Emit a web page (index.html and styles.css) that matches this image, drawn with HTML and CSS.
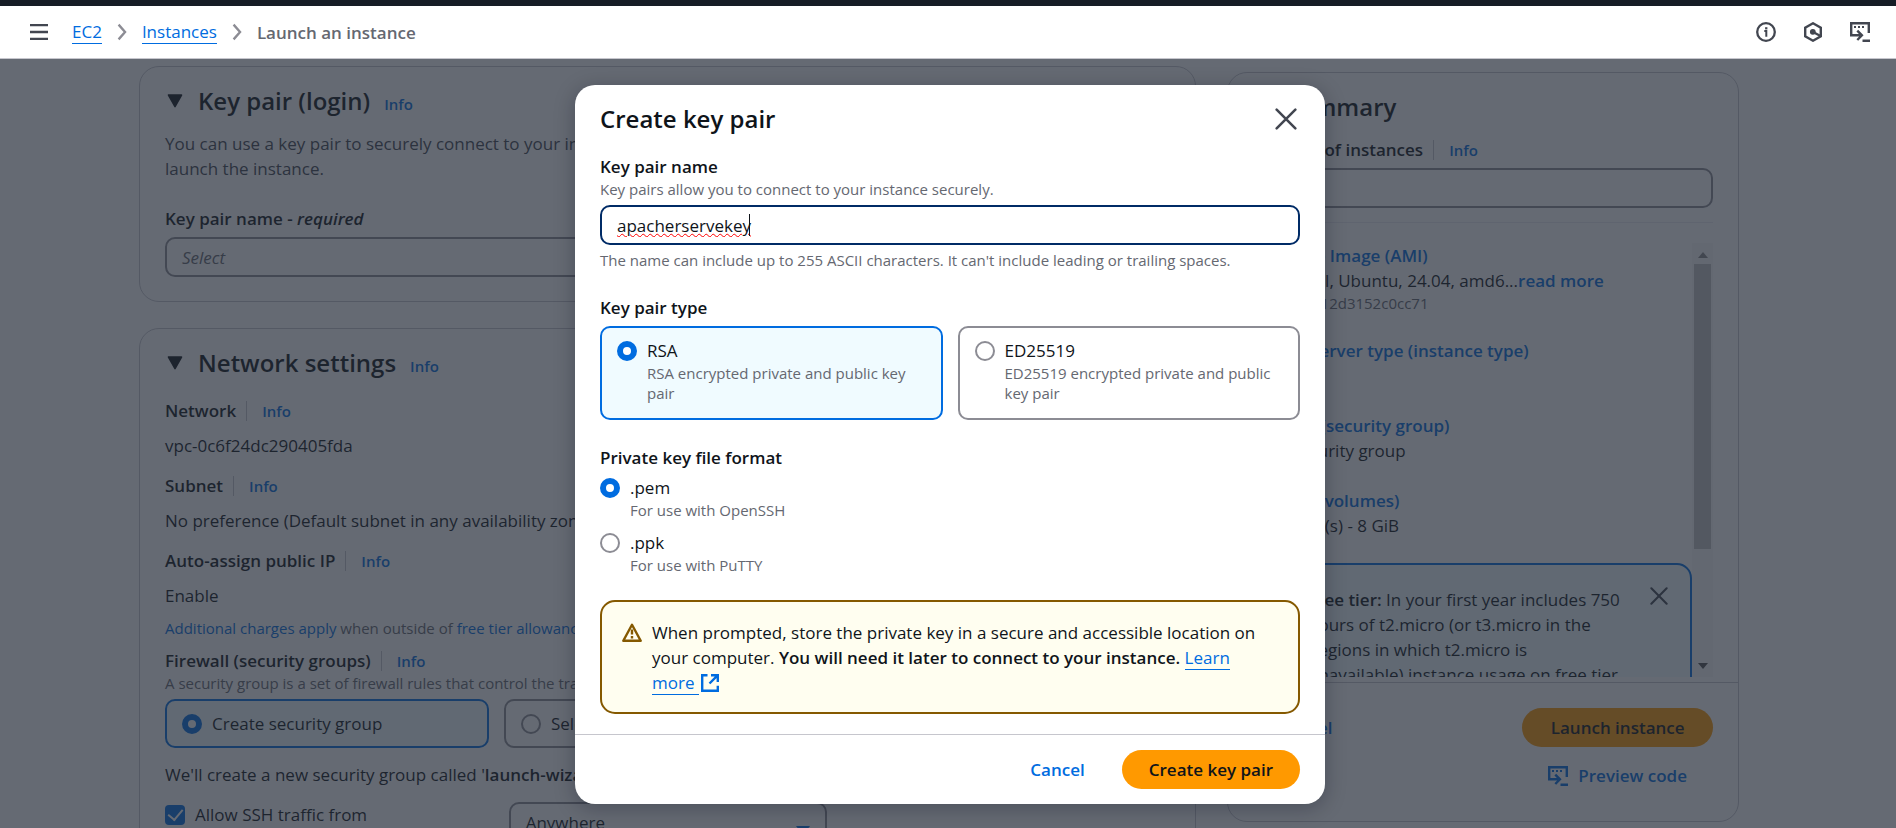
FILE: index.html
```html
<!DOCTYPE html>
<html lang="en">
<head>
<meta charset="utf-8">
<title>Launch an instance | EC2</title>
<link rel="stylesheet" href="styles.css">
</head>
<body>
<svg class="defs" aria-hidden="true">
  <symbol id="i-cmd" viewBox="0 0 20 20"><path d="M1.200 14.500V1.200h17.600V11M0 13.300h10M7.300 8.600l4.600 4.700-4.600 4.700M12.500 18.800H20" fill="none" stroke="currentColor" stroke-width="2.400"/><path d="M4 5h2M8 5h2M12 5h2" stroke="currentColor" stroke-width="2.200"/></symbol>
  <symbol id="i-x" viewBox="0 0 20 20"><path d="M1.5 1.5l17 17M18.5 1.5l-17 17" fill="none" stroke="currentColor" stroke-width="2.3" stroke-linecap="round"/></symbol>
  <symbol id="i-chev" viewBox="0 0 10 20"><path d="M1.2 1.8L8.4 10l-7.2 8.2" fill="none" stroke="currentColor" stroke-width="2.6"/></symbol>
  <symbol id="i-tri" viewBox="0 0 16 14"><path d="M1.5 1h13L8 12.6z" fill="currentColor" stroke="currentColor" stroke-width="1.6" stroke-linejoin="round"/></symbol>
</svg>

<div class="topbar"></div>
<header class="header">
  <button class="icon-btn menu" aria-label="Open navigation"><svg width="18" height="16" viewBox="0 0 18 16"><path d="M0 1.2h18M0 8h18M0 14.8h18" stroke="currentColor" stroke-width="2.3"/></svg></button>
  <nav class="crumbs" aria-label="Breadcrumbs">
    <a href="#">EC2</a>
    <svg width="10" height="18"><use href="#i-chev"/></svg>
    <a href="#">Instances</a>
    <svg width="10" height="18"><use href="#i-chev"/></svg>
    <strong>Launch an instance</strong>
  </nav>
  <div class="tools">
    <button class="icon-btn" aria-label="Info"><svg width="20" height="20" viewBox="0 0 20 20"><circle cx="10" cy="10" r="8.800" fill="none" stroke="currentColor" stroke-width="2.300"/><path d="M8.300 9h2v5.800" fill="none" stroke="currentColor" stroke-width="2"/><path d="M9.100 5.200h2.300v2.200H9.100z" fill="currentColor"/></svg></button>
    <button class="icon-btn" aria-label="Tutorials"><svg width="20" height="20" viewBox="0 0 20 20"><path d="M10 1.300l7.800 4.300v8.800L10 18.700l-7.800-4.300V5.600z" fill="none" stroke="currentColor" stroke-width="2.400"/><circle cx="9.800" cy="9.800" r="2.900" fill="currentColor"/><path d="M10 10l7.500 4" stroke="currentColor" stroke-width="2.400"/></svg></button>
    <button class="icon-btn" aria-label="Preview code"><svg width="20" height="20"><use href="#i-cmd"/></svg></button>
  </div>
</header>

<div class="stage">
  <main class="page">
    <div class="forms">
      <section class="card">
        <h2 class="card-title"><svg width="16" height="14"><use href="#i-tri"/></svg>Key pair (login) <a class="info" href="#">Info</a></h2>
        <p class="desc">You can use a key pair to securely connect to your instance. Ensure that you have access to the selected key pair before you launch the instance.</p>
        <label class="label" for="kp">Key pair name - <em>required</em></label>
        <button class="select placeholder" id="kp">Select</button>
      </section>

      <section class="card">
        <h2 class="card-title"><svg width="16" height="14"><use href="#i-tri"/></svg>Network settings <a class="info" href="#">Info</a></h2>
        <dl class="facts">
          <dt><span>Network</span><a class="info" href="#">Info</a></dt>
          <dd>vpc-0c6f24dc290405fda</dd>
          <dt><span>Subnet</span><a class="info" href="#">Info</a></dt>
          <dd>No preference (Default subnet in any availability zone)</dd>
          <dt><span>Auto-assign public IP</span><a class="info" href="#">Info</a></dt>
          <dd>Enable</dd>
        </dl>
        <p class="small charges"><a href="#">Additional charges apply</a> when outside of <a href="#">free tier allowance</a></p>
        <div class="split"><span>Firewall (security groups)</span><a class="info" href="#">Info</a></div>
        <p class="small">A security group is a set of firewall rules that control the traffic for your instance.</p>
        <div class="tiles sg">
          <label class="tile on"><input type="radio" name="sg" checked><span>Create security group</span></label>
          <label class="tile"><input type="radio" name="sg"><span>Select existing security group</span></label>
        </div>
        <p class="newsg">We'll create a new security group called '<strong>launch-wizard-1</strong>' with the following rules:</p>
        <div class="rule">
          <label class="check"><input type="checkbox" checked>Allow SSH traffic from</label>
          <button class="select anywhere">Anywhere<svg width="14" height="10" viewBox="0 0 14 10"><path d="M0 0h14L7 9z" fill="currentColor"/></svg></button>
        </div>
      </section>
    </div>

    <aside class="summary">
      <h2 class="card-title"><svg width="16" height="14"><use href="#i-tri"/></svg>Summary</h2>
      <label class="split" for="count"><span>Number of instances</span><a class="info" href="#">Info</a></label>
      <input class="count" id="count" type="text">
      <div class="scroller">
        <div class="scroll-body">
          <dl class="specs">
            <dt><a href="#">Software Image (AMI)</a></dt>
            <dd>Canonical, Ubuntu, 24.04, amd6...<a href="#">read more</a><small>ami-0fc8a12d3152c0cc71</small></dd>
            <dt><a href="#">Virtual server type (instance type)</a></dt>
            <dd>t2.micro</dd>
            <dt><a href="#">Firewall (security group)</a></dt>
            <dd>New security group</dd>
            <dt><a href="#">Storage (volumes)</a></dt>
            <dd>1 volume(s) - 8 GiB</dd>
          </dl>
          <div class="tier">
            <p><strong>Free tier:</strong> In your first year includes 750 hours of t2.micro (or t3.micro in the Regions in which t2.micro is unavailable) instance usage on free tier AMIs per month.</p>
            <button class="icon-btn" aria-label="Dismiss"><svg width="18" height="18"><use href="#i-x"/></svg></button>
          </div>
        </div>
        <div class="bar" aria-hidden="true">
          <svg class="up" width="10" height="6" viewBox="0 0 10 6"><path d="M0 6h10L5 0z" fill="currentColor"/></svg>
          <div class="thumb"></div>
          <svg class="down" width="10" height="6" viewBox="0 0 10 6"><path d="M0 0h10L5 6z" fill="currentColor"/></svg>
        </div>
      </div>
      <div class="launch">
        <button class="link">Cancel</button>
        <button class="primary">Launch instance</button>
        <button class="link preview"><svg width="20" height="20"><use href="#i-cmd"/></svg>Preview code</button>
      </div>
    </aside>
  </main>

  <div class="overlay">
    <form class="modal" role="dialog" aria-labelledby="modal-title">
      <div class="modal-head">
        <h2 id="modal-title">Create key pair</h2>
        <button type="button" class="icon-btn" aria-label="Close"><svg width="22" height="22"><use href="#i-x"/></svg></button>
      </div>
      <div class="modal-body">
        <div class="field">
          <label class="label" for="name">Key pair name</label>
          <p class="small">Key pairs allow you to connect to your instance securely.</p>
          <div class="name-box">
            <input class="name" id="name" type="text" value="apacherservekey">
            <span class="caret"></span>
          </div>
          <p class="small">The name can include up to 255 ASCII characters. It can't include leading or trailing spaces.</p>
        </div>
        <fieldset class="field">
          <legend class="label">Key pair type</legend>
          <div class="tiles">
            <label class="tile on"><input type="radio" name="type" checked><span>RSA<small>RSA encrypted private and public key pair</small></span></label>
            <label class="tile"><input type="radio" name="type"><span>ED25519<small>ED25519 encrypted private and public key pair</small></span></label>
          </div>
        </fieldset>
        <fieldset class="field">
          <legend class="label">Private key file format</legend>
          <div class="radios">
            <label><input type="radio" name="fmt" checked><span>.pem<small>For use with OpenSSH</small></span></label>
            <label><input type="radio" name="fmt"><span>.ppk<small>For use with PuTTY</small></span></label>
          </div>
        </fieldset>
        <div class="alert">
          <svg width="20" height="20" viewBox="0 0 20 20"><path d="M10 1.800L18.700 17.800H1.300z" fill="none" stroke="currentColor" stroke-width="2.400" stroke-linejoin="round"/><path d="M10 6.600v5M10 13v2.400" stroke="currentColor" stroke-width="2.400"/></svg>
          <p>When prompted, store the private key in a secure and accessible location on your computer. <strong>You will need it later to connect to your instance.</strong> <a href="#">Learn more </a><svg class="ext" width="18" height="18" viewBox="0 0 18 18"><path d="M6.500 1.200H1.200v15.600h15.600v-5M10 1.200h6.800V8M16.800 1.200L8.500 9.500" fill="none" stroke="currentColor" stroke-width="2.400"/></svg></p>
        </div>
      </div>
      <div class="modal-foot">
        <button type="button" class="link">Cancel</button>
        <button type="button" class="primary">Create key pair</button>
      </div>
    </form>
  </div>
</div>
</body>
</html>
```
FILE: styles.css
```css
:root {
  --text: #0f141a;
  --muted: #656871;
  --link: #006ce0;
  --border: #8c8c94;
  --soft: #c6c6cd;
  --accent: #ff9900;
  --bold: 600;
}

* { box-sizing: border-box; margin: 0; padding: 0; }

body {
  display: flex;
  flex-direction: column;
  height: 100vh;
  overflow: hidden;
  font: 17px/25px "Open Sans", "Noto Sans", sans-serif;
  color: var(--text);
  background: #fff;
}

button, input { font: inherit; color: inherit; }
button { background: none; border: 0; cursor: pointer; }
fieldset { border: 0; min-width: 0; }
a { color: var(--link); text-decoration: none; }
svg { flex: none; }
h2, strong { font-weight: var(--bold); }
.defs { position: absolute; width: 0; height: 0; }

.small, small { font-size: 15px; line-height: 20px; color: var(--muted); }
small { display: block; }
.label { display: block; font-weight: var(--bold); }
.info { font-size: 15px; line-height: 20px; font-weight: var(--bold); }

/* Header */
.topbar { flex: none; height: 6px; background: #161d26; }
.header {
  flex: none;
  display: flex;
  align-items: center;
  height: 53px;
  padding: 0 26px 0 30px;
  border-bottom: 1px solid var(--soft);
}
.icon-btn { display: flex; color: #424650; }
.crumbs { display: flex; align-items: center; gap: 15px; margin-left: 24px; color: var(--border); }
.crumbs a { line-height: 22px; border-bottom: 1px solid; }
.crumbs strong { color: var(--muted); }
.tools { display: flex; gap: 27px; margin-left: auto; }

/* Page */
.stage { position: relative; flex: 1; min-height: 0; overflow: hidden; }
.page {
  display: grid;
  grid-template-columns: minmax(0, 1fr) 512px;
  align-items: start;
  gap: 31px;
  padding: 7px 157px 0 139px;
}
.forms { display: grid; gap: 26px; }
.card, .summary { border: 1px solid var(--soft); border-radius: 20px; }
.card { padding: 19px 25px 24px; }
.card-title { display: flex; align-items: baseline; font-size: 24px; line-height: 30px; }
.card-title svg { margin: 0 15px 0 2px; align-self: center; }
.card-title .info { margin-left: 14px; }
.desc { margin: 15px 0 25px; color: #424650; }

.select {
  display: flex;
  align-items: center;
  justify-content: space-between;
  width: 100%;
  height: 40px;
  margin-top: 6px;
  padding: 0 15px;
  border: 2px solid var(--border);
  border-radius: 10px;
}
.placeholder { font-style: italic; color: var(--muted); }

.facts { margin-top: 20px; }
.facts dt, .split { display: flex; align-items: center; font-weight: var(--bold); }
.facts dt .info, .split .info { margin-left: 10px; padding-left: 15px; border-left: 1px solid var(--soft); }
.facts dd { margin: 10px 0 15px; }
.charges { margin: -5px 0 10px; }
.newsg { margin: 14px 0 15px; }
.rule { display: grid; grid-template-columns: 1fr 2fr; gap: 13px; }
.check { display: flex; align-items: center; gap: 10px; height: 25px; }
.anywhere { width: 318px; margin-top: 0; }
.anywhere svg { margin-top: 18px; color: var(--link); }

input[type="radio"], input[type="checkbox"] {
  flex: none;
  appearance: none;
  width: 20px;
  height: 20px;
  margin-top: 3px;
  border: 2px solid var(--border);
  border-radius: 50%;
  background: #fff;
}
input[type="radio"]:checked { border: 6px solid var(--link); }
input[type="checkbox"] { border-radius: 4px; margin-top: 0; }
input[type="checkbox"]:checked {
  border: 0;
  background: var(--link);
  display: grid;
  place-items: center;
}
input[type="checkbox"]:checked::after {
  content: "";
  width: 7px;
  height: 12px;
  margin-bottom: 3px;
  border: solid #fff;
  border-width: 0 2px 2px 0;
  rotate: 40deg;
}

.tiles { display: grid; grid-template-columns: 1fr 1fr; gap: 15px; margin-top: 6px; }
.tile {
  display: flex;
  gap: 10px;
  padding: 10px 15px 15px;
  border: 2px solid var(--border);
  border-radius: 10px;
}
.tile.on { border-color: var(--link); background: #f0fbff; }
.sg { grid-template-columns: 324px 324px; }
.sg .tile { padding: 10px 15px; }

/* Summary */
.summary { margin-top: 6px; }
.summary h2 { margin: 19px 24px 15px; }
.summary .split { margin: 0 24px; }
.count {
  display: block;
  width: calc(100% - 49px);
  height: 40px;
  margin: 6px 24px 14px;
  border: 2px solid var(--border);
  border-radius: 10px;
}
.scroller {
  display: flex;
  height: 455px;
  margin: 0 25px 0 24px;
  padding-top: 20px;
  border-top: 1px solid #ebebf0;
}
.scroll-body { flex: 1; overflow: hidden; }
.specs dt { font-weight: var(--bold); }
.specs dd { margin-bottom: 25px; }
.specs dd a { font-weight: var(--bold); }
.tier {
  display: flex;
  gap: 25px;
  padding: 22px 22px 22px 54px;
  border: 2px solid var(--link);
  border-radius: 15px;
  background: #f0fbff;
}
.tier button { align-self: start; margin-left: auto; }
.bar {
  display: flex;
  flex-direction: column;
  align-items: center;
  width: 21px;
  background: #f8f8f8;
  color: #8a8a8a;
}
.bar .up { margin: 9px 0 6px; }
.bar .thumb { width: 17px; height: 285px; background: #c1c1c1; }
.bar .down { margin: auto 0 8px; color: #505050; }
.launch {
  display: grid;
  grid-template-columns: auto auto;
  justify-content: space-between;
  gap: 16px 0;
  margin-top: 5px;
  padding: 25px 25px 33px 24px;
  border-top: 1px solid var(--soft);
}

.link { padding: 0 26px; font-weight: var(--bold); color: var(--link); }
.primary { height: 39px; padding: 0 27px; border-radius: 20px; font-weight: var(--bold); background: var(--accent); }
.preview { grid-column: 2; display: flex; align-items: center; gap: 10px; justify-content: end; }

/* Modal */
.overlay {
  position: absolute;
  inset: 0;
  display: flex;
  align-items: center;
  justify-content: center;
  padding: 2px 0 0 4px;
  background: rgba(35, 43, 55, .7);
}
.modal {
  width: 750px;
  border-radius: 20px;
  background: #fff;
  box-shadow: 0 4px 20px 1px rgba(0, 7, 22, .25);
}
.modal-head { display: flex; justify-content: space-between; align-items: center; padding: 19px 28px 20px 25px; }
.modal-head h2 { font-size: 24px; line-height: 30px; }
.modal-body { display: grid; gap: 25px; padding: 0 25px 20px; }
.name-box { position: relative; margin: 6px 0 5px; }
.name {
  display: block;
  width: 100%;
  height: 40px;
  padding: 0 15px;
  border: 2px solid #002b66;
  border-radius: 10px;
  outline: 0;
  text-decoration: underline wavy #f00 1px;
}
.caret { position: absolute; top: 9px; left: 149px; width: 1px; height: 22px; background: var(--text); }
.radios { display: grid; gap: 10px; margin-top: 5px; }
.radios label { display: flex; gap: 10px; }
.alert {
  display: flex;
  gap: 10px;
  padding: 18px 40px 17px 20px;
  border: 2px solid #855900;
  border-radius: 15px;
  background: #fffef0;
}
.alert > svg { margin-top: 3px; color: #855900; }
.alert a { border-bottom: 1px solid; }
.ext { margin-left: 2px; vertical-align: -3px; color: var(--link); }
.modal-foot { display: flex; justify-content: end; align-items: center; gap: 11px; padding: 15px 25px; border-top: 1px solid var(--soft); }
```
